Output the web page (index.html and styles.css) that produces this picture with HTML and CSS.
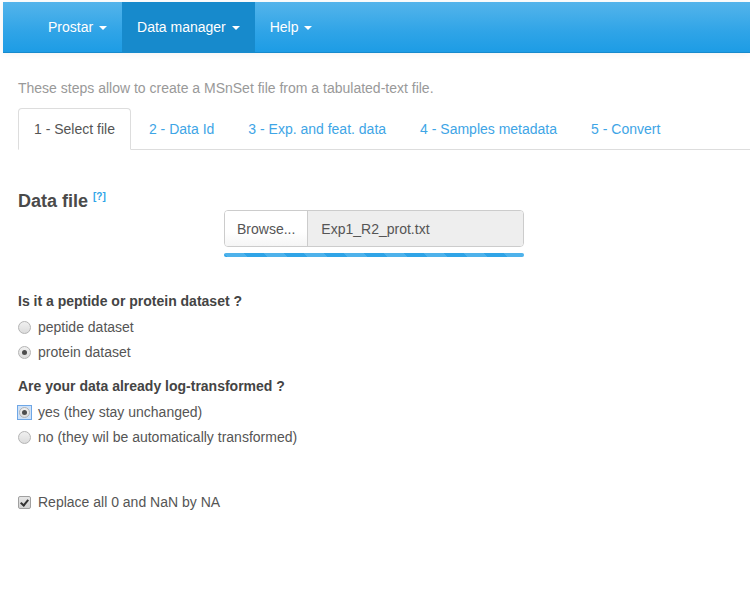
FILE: index.html
```html
<!DOCTYPE html>
<html lang="en">
<head>
    <meta charset="UTF-8">
    <meta name="viewport" content="width=device-width, initial-scale=1.0">
    <title>Prostar</title>
    <link rel="stylesheet" href="styles.css">
</head>
<body>

<div class="page">
    <nav class="navbar">
        <ul class="nav-menu">
            <li><a href="#">Prostar <span class="caret"></span></a></li>
            <li class="active"><a href="#">Data manager <span class="caret"></span></a></li>
            <li><a href="#">Help <span class="caret"></span></a></li>
        </ul>
    </nav>

    <div class="content">
        <p class="intro">These steps allow to create a MSnSet file from a tabulated-text file.</p>

        <ul class="tabs">
            <li class="active"><a href="#">1 - Select file</a></li>
            <li><a href="#">2 - Data Id</a></li>
            <li><a href="#">3 - Exp. and feat. data</a></li>
            <li><a href="#">4 - Samples metadata</a></li>
            <li><a href="#">5 - Convert</a></li>
        </ul>

        <div class="file-row">
            <h4 class="file-title">Data file <sup><a href="#">[?]</a></sup></h4>
            <div class="file-input">
                <div class="input-group">
                    <span class="btn-browse">Browse...</span>
                    <span class="file-name">Exp1_R2_prot.txt</span>
                </div>
                <div class="progress"><div class="progress-bar"></div></div>
            </div>
        </div>

        <div class="form-group">
            <label class="group-label">Is it a peptide or protein dataset ?</label>
            <label class="radio"><span class="box"><input type="radio" name="type"></span> peptide dataset</label>
            <label class="radio"><span class="box"><input type="radio" name="type" checked></span> protein dataset</label>
        </div>

        <div class="form-group">
            <label class="group-label">Are your data already log-transformed ?</label>
            <label class="radio"><span class="box focused"><input type="radio" name="log" checked></span> yes (they stay unchanged)</label>
            <label class="radio"><span class="box"><input type="radio" name="log"></span> no (they wil be automatically transformed)</label>
        </div>

        <div class="form-group check-group">
            <label class="radio"><span class="box"><input type="checkbox" checked></span> Replace all 0 and NaN by NA</label>
        </div>
    </div>
</div>

</body>
</html>
```

FILE: styles.css
```css
body {
    font-family: "Liberation Sans", Arial, sans-serif;
    font-size: 14px;
    line-height: 20px;
    color: #555;
    margin: 0;
    background: #fff;
}
a {
    text-decoration: none;
}
.page {
    padding: 2px 0 0 3px;
}
.navbar {
    height: 50px;
    background-image: linear-gradient(#54b4eb, #2fa4e7 60%, #1d9ce5);
    border-bottom: 1px solid #178acc;
    box-shadow: 0 1px 8px rgba(0,0,0,0.06);
}
.nav-menu {
    list-style: none;
    margin: 0 0 0 30px;
    padding: 0;
    display: flex;
}
.nav-menu a {
    display: block;
    padding: 0 15px;
    line-height: 50px;
    color: #fff;
    text-shadow: 0 1px 0 rgba(0,0,0,0.05);
}
.nav-menu .active a {
    background-color: #178acc;
}
.caret {
    display: inline-block;
    width: 0;
    height: 0;
    margin-left: 2px;
    vertical-align: middle;
    border-top: 4px solid #fff;
    border-left: 4px solid transparent;
    border-right: 4px solid transparent;
}
.content {
    padding-left: 15px;
}
.intro {
    color: #999;
    margin: 25px 0 10px 0;
}
.tabs {
    list-style: none;
    margin: 0;
    padding: 0;
    display: flex;
    border-bottom: 1px solid #ddd;
}
.tabs li {
    margin-right: 2px;
    margin-bottom: -1px;
}
.tabs a {
    display: block;
    padding: 10px 15px;
    border: 1px solid transparent;
    border-radius: 4px 4px 0 0;
    color: #3ea5e6;
}
.tabs .active a {
    color: #555;
    background: #fff;
    border-color: #ddd #ddd transparent #ddd;
}
.file-row {
    display: flex;
    margin-top: 36px;
}
.file-title {
    width: 206px;
    margin: 0;
    font-size: 18px;
    line-height: 22px;
    font-weight: bold;
    color: #4a4a4a;
}
.file-title sup {
    font-size: 10px;
    vertical-align: 7px;
}
.file-title sup a {
    color: #2fa4e7;
}
.file-input {
    width: 300px;
    margin-top: 24px;
}
.input-group {
    display: flex;
    height: 37px;
    border: 1px solid #ccc;
    border-radius: 4px;
    box-sizing: border-box;
    overflow: hidden;
}
.btn-browse {
    padding: 8px 12px 0 12px;
    background-image: linear-gradient(#fff, #fff 60%, #f5f5f5);
    border-right: 1px solid #ccc;
    color: #555;
}
.file-name {
    flex: 1;
    padding: 8px 12px 0 13px;
    background: #eee;
    color: #555;
}
.progress {
    margin-top: 6px;
    height: 4px;
    border-radius: 2px;
    overflow: hidden;
    background: #f5f5f5;
}
.progress-bar {
    height: 100%;
    background-color: #2fa4e7;
    background-image: linear-gradient(45deg, rgba(255,255,255,0.15) 25%, transparent 25%, transparent 50%, rgba(255,255,255,0.15) 50%, rgba(255,255,255,0.15) 75%, transparent 75%, transparent);
    background-size: 40px 40px;
}
.form-group {
    display: flex;
    flex-direction: column;
    gap: 5px;
    margin-top: 34px;
}
.form-group + .form-group {
    margin-top: 14px;
}
.form-group + .check-group {
    margin-top: 45px;
}
.group-label {
    font-weight: bold;
    color: #444;
    margin-bottom: 1px;
}
.radio {
    display: flex;
    align-items: center;
    color: #555;
}
.box {
    display: flex;
    align-items: center;
    justify-content: center;
    width: 13px;
    height: 13px;
    margin-right: 7px;
}
.box.focused {
    width: 13px;
    height: 13px;
    outline: 1px solid #6fa7e6;
    background: #cfe2f8;
}
.box input {
    appearance: none;
    -webkit-appearance: none;
    width: 13px;
    height: 13px;
    margin: 0;
    border: 1px solid #b4b4b4;
    border-radius: 50%;
    background-image: linear-gradient(#f0f0f0, #dcdcdc);
    box-sizing: border-box;
    position: relative;
}
.box.focused input {
    width: 11px;
    height: 11px;
}
.box input[type="radio"]:checked::after {
    content: "";
    position: absolute;
    left: 50%;
    top: 50%;
    width: 5px;
    height: 5px;
    margin: -2.5px 0 0 -2.5px;
    border-radius: 50%;
    background: #4d4d4d;
}
.box input[type="checkbox"] {
    border-radius: 2px;
    border-color: #a0a0a0;
    background-image: linear-gradient(#e6e6e6, #d2d2d2);
}
.box input[type="checkbox"]:checked::after {
    content: "";
    position: absolute;
    left: 3px;
    top: 1px;
    width: 3px;
    height: 6px;
    border: solid #333;
    border-width: 0 2px 2px 0;
    transform: rotate(40deg);
}
```
